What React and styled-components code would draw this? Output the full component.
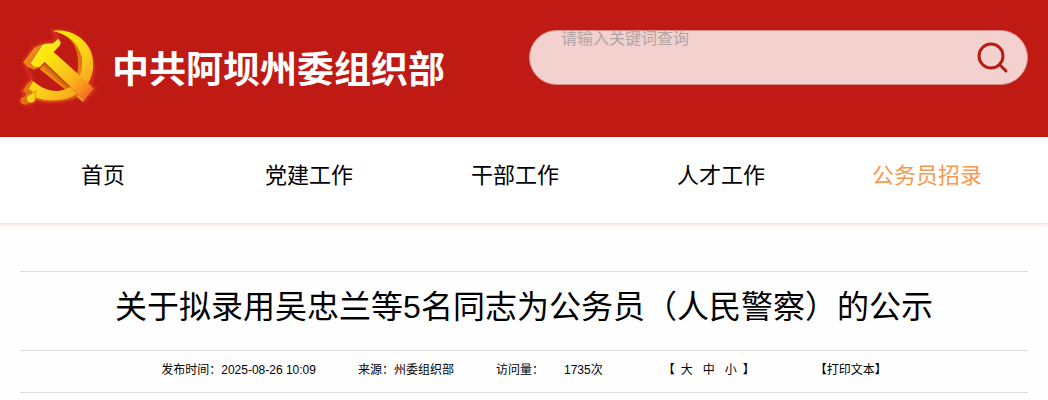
import React from "react";
import styled, { createGlobalStyle } from "styled-components";

const GlobalStyle = createGlobalStyle`
  * {
    box-sizing: border-box;
  }
  body {
    margin: 0;
    background: #fefefe;
    color: #000;
    font-family: "Liberation Sans", "Noto Sans CJK SC", sans-serif;
  }
`;

const Header = styled.header`
  display: flex;
  justify-content: space-between;
  align-items: flex-start;
  padding: 30px 20px 29px;
  background: #c01a14;
`;

const Brand = styled.a`
  display: flex;
  align-items: center;
  gap: 12px;
  color: #fff;
  text-decoration: none;
`;

const BrandName = styled.span`
  padding-top: 4px;
  font-size: 37px;
  line-height: 40px;
  font-weight: bold;
  white-space: nowrap;
`;

const SearchForm = styled.form`
  display: flex;
  align-items: flex-start;
  width: 49.5%;
  height: 55px;
  padding: 0 18px 0 31px;
  border: 1px solid #d9908c;
  border-radius: 28px;
  background: #f3d1cf;
`;

const SearchInput = styled.input`
  flex: 1;
  min-width: 0;
  height: 16px;
  padding: 0;
  border: 0;
  outline: 0;
  background: transparent;
  font-family: inherit;
  font-size: 16px;
  line-height: 16px;

  &::placeholder {
    color: #b0a5a4;
  }
`;

const SearchButton = styled.button`
  display: flex;
  align-self: center;
  padding: 0;
  border: 0;
  background: none;
  cursor: pointer;
`;

const Nav = styled.nav`
  display: flex;
  padding-right: 18px;
  background: #fff;
  box-shadow: 0 1px 4px rgba(192, 26, 20, 0.2);
`;

const NavLink = styled.a`
  flex: 1;
  padding: 23px 0 31px;
  color: ${(props) => (props.$active ? "#f7994f" : "#000")};
  font-size: 22px;
  line-height: 32px;
  text-align: center;
  text-decoration: none;
`;

const Article = styled.main`
  margin: 48px 20px 0;
  border-top: 1px solid #dcdcdc;
`;

const Title = styled.h1`
  margin: 0;
  padding: 11px 0 19px;
  font-size: 32px;
  line-height: 48px;
  font-weight: normal;
  text-align: center;
`;

const Meta = styled.div`
  display: flex;
  justify-content: center;
  gap: 60px;
  padding: 9px 0 12px;
  border-top: 1px solid #dcdcdc;
  border-bottom: 1px solid #dcdcdc;
  font-size: 12px;
  line-height: 20px;
  white-space: nowrap;
`;

const MetaGroup = styled.div`
  display: flex;
  gap: 42px;
`;

const Visits = styled.span`
  display: flex;
  gap: 20px;
`;

const SizePicker = styled.div`
  display: flex;
  gap: 6px;
`;

const TextButton = styled.button`
  padding: 0 ${(props) => props.$space || 0}px;
  border: 0;
  background: none;
  color: inherit;
  font: inherit;
  cursor: pointer;
`;

const navItems = ["首页", "党建工作", "干部工作", "人才工作", "公务员招录"];

function Emblem() {
  return (
    <svg width="80" height="78" viewBox="30 30 240 234" overflow="visible" aria-hidden="true">
      <defs>
        <linearGradient id="face" x1="70" y1="70" x2="245" y2="235" gradientUnits="userSpaceOnUse">
          <stop offset="0" stopColor="#fff000" />
          <stop offset="0.3" stopColor="#ffe014" />
          <stop offset="0.65" stopColor="#fbb81c" />
          <stop offset="0.85" stopColor="#f58a1e" />
          <stop offset="1" stopColor="#ea5a20" />
        </linearGradient>
        <linearGradient id="blade" x1="90" y1="60" x2="235" y2="220" gradientUnits="userSpaceOnUse">
          <stop offset="0" stopColor="#fff000" />
          <stop offset="0.55" stopColor="#fdcf1c" />
          <stop offset="1" stopColor="#f59a1e" />
        </linearGradient>
        <linearGradient id="side" x1="40" y1="80" x2="230" y2="240" gradientUnits="userSpaceOnUse">
          <stop offset="0" stopColor="#f0901a" />
          <stop offset="0.5" stopColor="#e06c10" />
          <stop offset="1" stopColor="#f38a1c" />
        </linearGradient>
        <linearGradient id="handleSide" x1="144" y1="163" x2="124" y2="184" gradientUnits="userSpaceOnUse">
          <stop offset="0" stopColor="#b8480c" />
          <stop offset="0.5" stopColor="#e87c14" />
          <stop offset="1" stopColor="#fbae1c" />
        </linearGradient>
        <filter id="glow" x="-20%" y="-20%" width="140%" height="140%">
          <feGaussianBlur stdDeviation="4" />
        </filter>
      </defs>
      <g fill="none" stroke="#ee4a2c" strokeWidth="7" opacity="0.7" filter="url(#glow)">
        <path d="M128 33C194 25 244 76 250 136C252 158 248 176 240 189L255 207L222 243L204 229C170 247 113 248 80 239L52 256L31 243L48 225L36 213L52 190L66 178L48 141L40 126L72 82L96 71L125 68L144 55Z" />
      </g>
      <path
        fill="url(#side)"
        d="M128 34C156 37 179 52 193 77C205 104 207 133 201 163L211 169C224 126 213 69 177 43C163 35 146 31 128 34Z"
      />
      <path fill="url(#side)" d="M40 126L73 83L98 72L62 130L72 142L98 137L91 142L72 149L52 141Z" />
      <path fill="url(#side)" d="M38 213L54 189L66 180L74 192L60 210L70 216L68 226L80 240L47 254C34 255 28 244 33 234L46 229L48 219Z" />
      <path fill="#d9600f" d="M80 240C113 250 172 247 204 229L204 222L82 230Z" />
      <path fill="url(#handleSide)" d="M90 148L105 128L190 208L172 214Z" />
      <path
        fill="url(#blade)"
        d="M130 33C182 25 228 57 243 95C256 136 250 172 224 206C181 244 121 247 82 234L75 236C75 245 69 250 61 248C49 245 48 232 56 226L66 221L68 215L56 207L70 184L82 193C112 216 151 219 179 202C209 184 222 148 214 108C203 68 174 43 130 33Z"
      />
      <path fill="none" stroke="#d9600f" strokeWidth="2" d="M70 217L82 212M75 236L78 222L68 215" />
      <path fill="none" stroke="#c9560c" strokeWidth="3" opacity="0.7" d="M181 201L204 223" />
      <path
        fill="url(#face)"
        d="M62 130L97 75L104 71L129 70L145 56L152 66L150 76L131 96L245 199L250 207L223 241L204 222L104 126L90 140L72 141Z"
      />
      <path fill="#fff36b" opacity="0.5" d="M98 75L130 72L146 58L149 65L130 77L101 80L68 131L63 130Z" />
      <path fill="#f39a20" d="M204 222L223 241L218 245L200 230Z" />
    </svg>
  );
}

function SearchIcon() {
  return (
    <svg width="32" height="32" viewBox="0 0 32 32" fill="none" stroke="#b81c17" aria-hidden="true">
      <circle cx="14" cy="14" r="12" strokeWidth="3" />
      <path d="M22.5 22.5L29 29" strokeWidth="3" strokeLinecap="round" />
    </svg>
  );
}

export default function App() {
  return (
    <>
      <GlobalStyle />
      <Header>
        <Brand href="#">
          <Emblem />
          <BrandName>中共阿坝州委组织部</BrandName>
        </Brand>
        <SearchForm role="search" onSubmit={(e) => e.preventDefault()}>
          <SearchInput type="text" name="keyword" aria-label="请输入关键词查询" placeholder="请输入关键词查询" />
          <SearchButton type="submit" aria-label="查询">
            <SearchIcon />
          </SearchButton>
        </SearchForm>
      </Header>
      <Nav>
        {navItems.map((item) => (
          <NavLink key={item} href="#" $active={item === "公务员招录"}>
            {item}
          </NavLink>
        ))}
      </Nav>
      <Article>
        <Title>关于拟录用吴忠兰等5名同志为公务员（人民警察）的公示</Title>
        <Meta>
          <MetaGroup>
            <span>发布时间：2025-08-26 10:09</span>
            <span>来源：州委组织部</span>
            <Visits>
              <span>访问量：</span>
              <span>1735次</span>
            </Visits>
          </MetaGroup>
          <SizePicker>
            <span>【</span>
            <div>
              <TextButton type="button">大</TextButton>
              <TextButton type="button" $space={10}>中</TextButton>
              <TextButton type="button">小</TextButton>
            </div>
            <span>】</span>
          </SizePicker>
          <TextButton type="button">【打印文本】</TextButton>
        </Meta>
      </Article>
    </>
  );
}
